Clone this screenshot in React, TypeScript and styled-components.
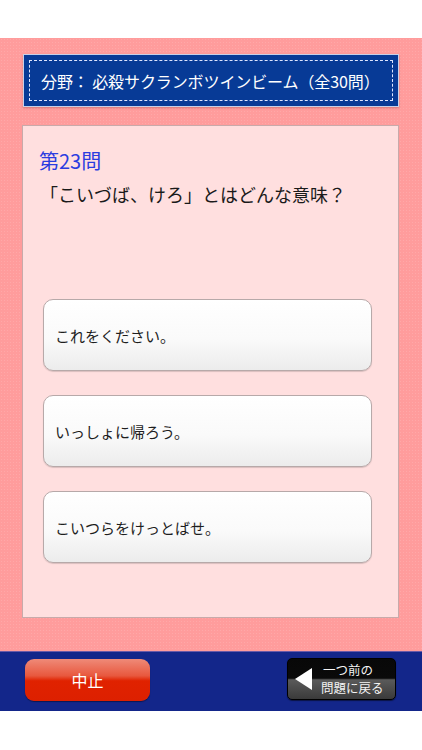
import React from "react";
import styled, { createGlobalStyle } from "styled-components";

const Global = createGlobalStyle`
  html, body { margin: 0; padding: 0; background: #ffffff; }
  body { font-family: "Noto Sans CJK JP", "Noto Sans", sans-serif; }
`;

const Page = styled.div`
  width: 422px;
  height: 750px;
  display: flex;
  flex-direction: column;
  background: #ffffff;
`;

const TopSpace = styled.div`
  height: 38px;
`;

const Main = styled.div`
  height: 613px;
  box-sizing: border-box;
  padding: 16px 23px 0 22px;
  background-color: #ff9c9c;
  background-image: radial-gradient(rgba(255,255,255,0.12) 1px, transparent 1px);
  background-size: 3px 3px;
  display: flex;
  flex-direction: column;
`;

const Header = styled.div`
  margin-left: 1px;
  width: 376px;
  height: 53px;
  box-sizing: border-box;
  background: #073a96;
  border: 1px solid #c7d0e8;
  box-shadow: 0 1px 2px rgba(120,40,40,0.35);
  padding: 5px;
`;

const HeaderInner = styled.div`
  height: 100%;
  box-sizing: border-box;
  border: 1.5px dashed #dfe6ff;
  display: flex;
  align-items: center;
  padding-left: 11px;
  color: #ffffff;
  font-size: 16px;
  letter-spacing: -0.1px;
`;

const Card = styled.div`
  margin-top: 18px;
  width: 377px;
  height: 493px;
  box-sizing: border-box;
  background: #ffdfdf;
  border: 1px solid #c8aaaa;
  padding: 21px 26px 0 16px;
  display: flex;
  flex-direction: column;
`;

const Number = styled.div`
  color: #2b3ce0;
  font-size: 20px;
  line-height: 28px;
  height: 28px;
`;

const Question = styled.div`
  color: #1a1a1a;
  font-size: 18px;
  line-height: 26px;
  margin-top: 6px;
  margin-left: 1px;
`;

const Choices = styled.div`
  margin-top: 92px;
  margin-left: 4px;
  display: flex;
  flex-direction: column;
  gap: 24px;
`;

const Choice = styled.div`
  width: 329px;
  height: 72px;
  box-sizing: border-box;
  border: 1px solid #b7a9a9;
  border-radius: 10px;
  background: linear-gradient(#ffffff 0%, #fafafa 55%, #ececec 100%);
  box-shadow: 0 1px 1px rgba(0,0,0,0.15);
  display: flex;
  align-items: center;
  padding-left: 11px;
  color: #1e1e1e;
  font-size: 15px;
`;

const BottomBar = styled.div`
  height: 60px;
  background: #13268a;
  border-top: 1px solid #6a5aa8;
  box-sizing: border-box;
  display: flex;
  align-items: flex-start;
  justify-content: space-between;
  padding: 6px 26px 0 25px;
`;

const StopButton = styled.div`
  margin-top: 1px;
  width: 125px;
  height: 42px;
  box-sizing: border-box;
  border-radius: 9px;
  background: linear-gradient(#ef8a78 0%, #e8583e 40%, #e02200 52%, #dd2000 100%);
  box-shadow: 0 1px 1px rgba(0,0,0,0.4);
  display: flex;
  align-items: center;
  justify-content: center;
  color: #ffffff;
  font-size: 16px;
`;

const BackButton = styled.div`
  width: 109px;
  height: 42px;
  box-sizing: border-box;
  border-radius: 5px;
  border: 1px solid #000;
  background: linear-gradient(#080808 0%, #0a0a0a 48%, #5a5a5a 52%, #3a3a3a 100%);
  box-shadow: 0 1px 1px rgba(0,0,0,0.5);
  display: flex;
  align-items: center;
  padding-left: 7px;
  gap: 9px;
`;

const BackLabel = styled.div`
  color: #f4f4f4;
  font-size: 12.5px;
  line-height: 18px;
  display: flex;
  flex-direction: column;
  align-items: flex-start;
  white-space: nowrap;
`;

const FirstLine = styled.span`
  padding-left: 2px;
`;

export default function App() {
  return (
    <Page>
      <Global />
      <TopSpace />
      <Main>
        <Header>
          <HeaderInner>分野：&nbsp;必殺サクランボツインビーム（全30問）</HeaderInner>
        </Header>
        <Card>
          <Number>第23問</Number>
          <Question>「こいづば、けろ」とはどんな意味？</Question>
          <Choices>
            <Choice>これをください。</Choice>
            <Choice>いっしょに帰ろう。</Choice>
            <Choice>こいつらをけっとばせ。</Choice>
          </Choices>
        </Card>
      </Main>
      <BottomBar>
        <StopButton>中止</StopButton>
        <BackButton>
          <svg width="17" height="22" viewBox="0 0 17 22">
            <polygon points="17,0 17,22 0,11" fill="#ffffff" />
          </svg>
          <BackLabel>
            <FirstLine>一つ前の</FirstLine>
            <span>問題に戻る</span>
          </BackLabel>
        </BackButton>
      </BottomBar>
    </Page>
  );
}
